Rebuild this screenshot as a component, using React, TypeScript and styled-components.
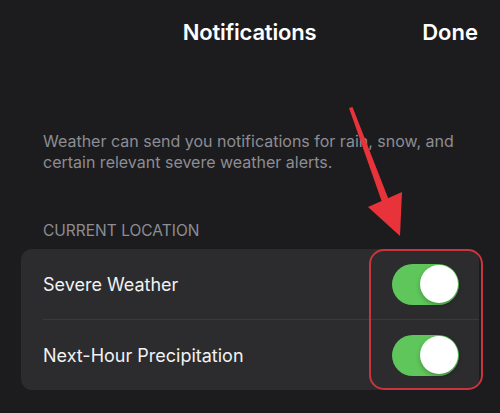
import styled, { createGlobalStyle } from 'styled-components'

const GlobalStyle = createGlobalStyle`
  html, body {
    margin: 0;
    padding: 0;
    background: #1c1c1e;
  }
`

const Page = styled.div`
  position: relative;
  width: 500px;
  height: 413px;
  overflow: hidden;
  background: #1c1c1e;
  font-family: Inter, 'Noto Sans', sans-serif;
  color: #fff;
`

const Header = styled.div`
  display: grid;
  grid-template-columns: 1fr auto 1fr;
  align-items: center;
  height: 64px;
  padding: 0 22px 0 21px;
`

const Title = styled.div`
  grid-column: 2;
  font-size: 22px;
  font-weight: 600;
  letter-spacing: -0.2px;
`

const DoneButton = styled.div`
  justify-self: end;
  font-size: 22px;
  font-weight: 600;
`

const Description = styled.p`
  margin: 67px 0 0;
  padding: 0 43px;
  font-size: 16px;
  line-height: 21px;
  color: #8d8d93;
`

const SectionLabel = styled.div`
  margin: 49px 0 0;
  padding: 0 43px;
  font-size: 15.5px;
  line-height: 18px;
  color: #8d8d93;
  text-transform: uppercase;
`

const Card = styled.div`
  margin: 9px 21px 0;
  background: #2c2c2e;
  border-radius: 11px;
  overflow: hidden;
`

const Row = styled.div<{ $divider?: boolean }>`
  display: flex;
  align-items: center;
  justify-content: space-between;
  height: 70px;
  margin-left: 22px;
  padding-right: 20px;
  border-top: ${(p) => (p.$divider ? '1px solid #3a3a3c' : 'none')};
`

const Label = styled.span`
  font-size: 18px;
  color: #f2f2f2;
`

const Track = styled.div<{ $on: boolean }>`
  position: relative;
  width: 67px;
  height: 41px;
  border-radius: 21px;
  background: ${(p) => (p.$on ? '#5ec65a' : '#39393d')};
`

const Knob = styled.div<{ $on: boolean }>`
  position: absolute;
  top: 1.5px;
  left: ${(p) => (p.$on ? '28px' : '2px')};
  width: 38px;
  height: 38px;
  border-radius: 50%;
  background: #fff;
  box-shadow: 0 2px 4px rgba(0, 0, 0, 0.25);
`

const Highlight = styled.div`
  position: absolute;
  left: 369px;
  top: 249px;
  width: 114px;
  height: 141px;
  box-sizing: border-box;
  border: 2.5px solid #c9353c;
  border-radius: 15px;
`

const Arrow = styled.svg`
  position: absolute;
  left: 0;
  top: 0;
  pointer-events: none;
`

function Toggle({ on }: { on: boolean }) {
  return (
    <Track $on={on}>
      <Knob $on={on} />
    </Track>
  )
}

const settings = [
  { label: 'Severe Weather', on: true },
  { label: 'Next-Hour Precipitation', on: true },
]

export default function App() {
  return (
    <>
      <GlobalStyle />
      <Page>
        <Header>
          <Title>Notifications</Title>
          <DoneButton>Done</DoneButton>
        </Header>
        <Description>
          Weather can send you notifications for rain, snow, and certain relevant severe weather alerts.
        </Description>
        <SectionLabel>Current Location</SectionLabel>
        <Card>
          {settings.map((s, i) => (
            <Row key={s.label} $divider={i > 0}>
              <Label>{s.label}</Label>
              <Toggle on={s.on} />
            </Row>
          ))}
        </Card>

        <Highlight />
        <Arrow width="500" height="413" viewBox="0 0 500 413">
          {/* tapered shaft + head */}
          <polygon points="349,108 352.5,107 390,203 383,205" fill="#e8333a" />
          <polygon points="368,207 402,192 400,236" fill="#e8333a" />
        </Arrow>
      </Page>
    </>
  )
}
